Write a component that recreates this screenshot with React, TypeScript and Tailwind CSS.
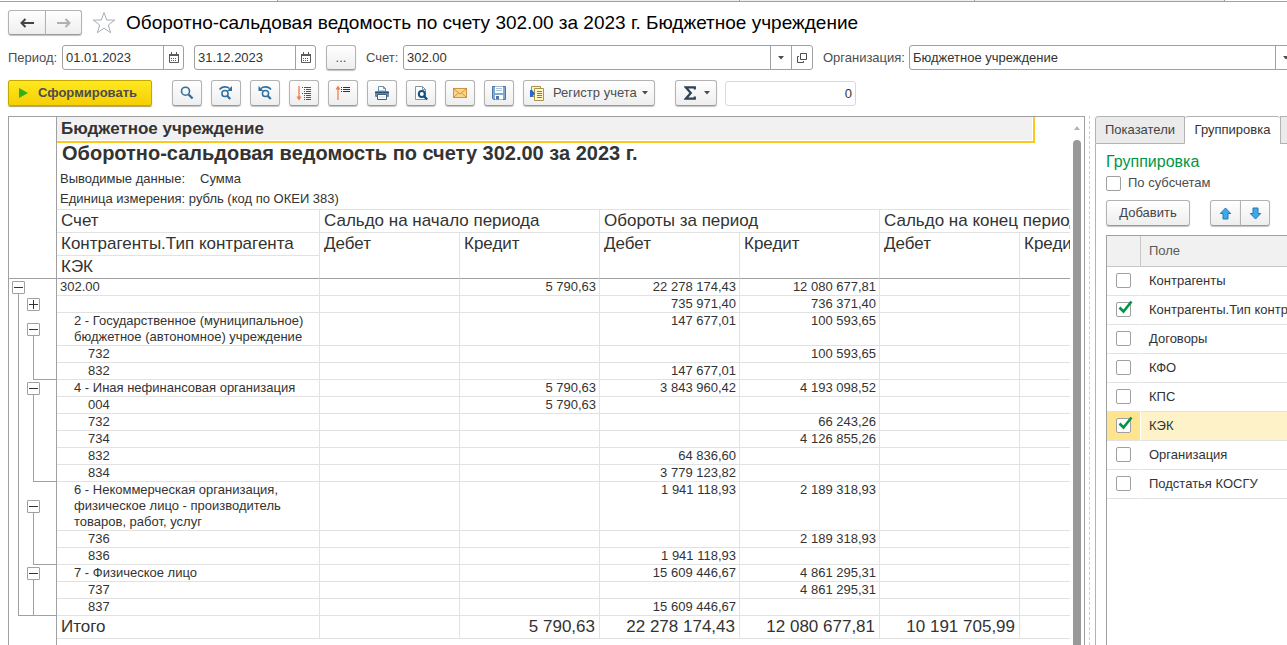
import { useState, type ReactNode } from 'react';

interface ReportRow {
  label: string;
  level: 0 | 1 | 2;
  values: string[];
}

interface OutlineGroup {
  id: string;
  height: string;
  offset: string;
}

interface Field {
  name: string;
  checked: boolean;
}

const rows: ReportRow[] = [
  { label: '302.00', level: 0, values: ['', '5 790,63', '22 278 174,43', '12 080 677,81', '', ''] },
  { label: '', level: 1, values: ['', '', '735 971,40', '736 371,40', '', ''] },
  { label: '2 - Государственное (муниципальное) бюджетное (автономное) учреждение', level: 1, values: ['', '', '147 677,01', '100 593,65', '', ''] },
  { label: '732', level: 2, values: ['', '', '', '100 593,65', '', ''] },
  { label: '832', level: 2, values: ['', '', '147 677,01', '', '', ''] },
  { label: '4 - Иная нефинансовая организация', level: 1, values: ['', '5 790,63', '3 843 960,42', '4 193 098,52', '', ''] },
  { label: '004', level: 2, values: ['', '5 790,63', '', '', '', ''] },
  { label: '732', level: 2, values: ['', '', '', '66 243,26', '', ''] },
  { label: '734', level: 2, values: ['', '', '', '4 126 855,26', '', ''] },
  { label: '832', level: 2, values: ['', '', '64 836,60', '', '', ''] },
  { label: '834', level: 2, values: ['', '', '3 779 123,82', '', '', ''] },
  { label: '6 - Некоммерческая организация, физическое лицо - производитель товаров, работ, услуг', level: 1, values: ['', '', '1 941 118,93', '2 189 318,93', '', ''] },
  { label: '736', level: 2, values: ['', '', '', '2 189 318,93', '', ''] },
  { label: '836', level: 2, values: ['', '', '1 941 118,93', '', '', ''] },
  { label: '7 - Физическое лицо', level: 1, values: ['', '', '15 609 446,67', '4 861 295,31', '', ''] },
  { label: '737', level: 2, values: ['', '', '', '4 861 295,31', '', ''] },
  { label: '837', level: 2, values: ['', '', '15 609 446,67', '', '', ''] },
];

const totals = ['', '5 790,63', '22 278 174,43', '12 080 677,81', '10 191 705,99', ''];

// heights follow the rows that each group spans
const groups: OutlineGroup[] = [
  { id: '2', height: 'h-[67px]', offset: 'pt-[10px]' },
  { id: '4', height: 'h-[102px]', offset: 'pt-[2px]' },
  { id: '6', height: 'h-[83px]', offset: 'pt-[18px]' },
  { id: '7', height: 'h-[51px]', offset: 'pt-[2px]' },
];

const initialFields: Field[] = [
  { name: 'Контрагенты', checked: false },
  { name: 'Контрагенты.Тип контрагента', checked: true },
  { name: 'Договоры', checked: false },
  { name: 'КФО', checked: false },
  { name: 'КПС', checked: false },
  { name: 'КЭК', checked: true },
  { name: 'Организация', checked: false },
  { name: 'Подстатья КОСГУ', checked: false },
];

const indents = { 0: 'pl-[3px]', 1: 'pl-[17px]', 2: 'pl-[31px]' };

const buttonFace = 'border border-[#b3b3b3] border-b-[#9a9a9a] bg-linear-to-b from-white to-[#eeeeee] shadow-[0_1px_1px_#c4c4c4]';

const CaretIcon = () => (
  <svg className="w-[6px] h-[4px] shrink-0" viewBox="0 0 6 4" fill="#4d4d4d">
    <path d="M0 0h6L3 3.6z" />
  </svg>
);

const CalendarIcon = () => (
  <svg className="w-[10px] h-[11px]" viewBox="0 0 10 11" fill="none">
    <path d="M.5 2.500h9v8h-9z" stroke="#5a5a5a" />
    <path d="M0 2h10v2H0zM2 0h1v2H2zM7 0h1v2H7z" fill="#5a5a5a" />
    <path d="M2 6.500h1M4 6.500h1M6 6.500h1M2 8.500h1M4 8.500h1M6 8.500h1" stroke="#5a5a5a" />
  </svg>
);

const SearchIcon = () => (
  <svg className="w-4 h-4" viewBox="0 0 16 16" fill="none" stroke="#2f6f9f">
    <circle cx="6.500" cy="6.200" r="4" strokeWidth="1.600" />
    <path d="M9.600 9.500l4 4" strokeWidth="2.400" />
  </svg>
);

const SearchNextIcon = () => (
  <svg className="w-4 h-4" viewBox="0 0 16 16" fill="none" stroke="#2f6f9f">
    <circle cx="7" cy="8.500" r="3.100" strokeWidth="1.500" />
    <path d="M9.300 11l3 3" strokeWidth="2.200" />
    <path d="M1.500 4.500C4 1.200 9 1.200 11.500 3.500" strokeWidth="1.600" />
    <path d="M14 1v5H9z" fill="#2f6f9f" stroke="none" />
  </svg>
);

const SearchPrevIcon = () => (
  <svg className="w-4 h-4" viewBox="0 0 16 16" fill="none" stroke="#2f6f9f">
    <circle cx="8.500" cy="8.500" r="3.100" strokeWidth="1.500" />
    <path d="M10.800 11l3 3" strokeWidth="2.200" />
    <path d="M14 4.500C11.500 1.200 6.500 1.200 4 3.500" strokeWidth="1.600" />
    <path d="M1.500 1v5h5z" fill="#2f6f9f" stroke="none" />
  </svg>
);

const ExpandIcon = () => (
  <svg className="w-4 h-4" viewBox="0 0 16 16" fill="none">
    <path d="M3 1v12" stroke="#ee7d4c" strokeWidth="1.300" />
    <path d="M.5 11.500h5L3 15.500z" fill="#ee7d4c" />
    <path d="M6 2.500h1M8 2.500h7M8 4.500h1M10 4.500h5M8 6.500h1M10 6.500h5M6 8.500h1M8 8.500h7M8 10.500h1M10 10.500h5M8 12.500h1M10 12.500h5M8 14.500h1M10 14.500h5" stroke="#555" />
  </svg>
);

const CollapseIcon = () => (
  <svg className="w-4 h-4" viewBox="0 0 16 16" fill="none">
    <path d="M3 3v12" stroke="#ee7d4c" strokeWidth="1.300" />
    <path d="M.5 4.500h5L3 .5z" fill="#ee7d4c" />
    <path d="M6 2.500h1M8 2.500h7M6 4.500h1M8 4.500h7M6 6.500h1M8 6.500h7" stroke="#333" />
  </svg>
);

const PrintIcon = () => (
  <svg className="w-4 h-4" viewBox="0 0 16 16" fill="none">
    <path d="M4.500 1.500h5l2 2V6h-7z" fill="#fff" stroke="#6c8cae" />
    <path d="M9.500 1.500v2h2" stroke="#6c8cae" />
    <rect x="1" y="6" width="14" height="6" rx="1" fill="#6489ad" />
    <path d="M1 7.500h14" stroke="#2f4d69" />
    <path d="M3.500 9.500h9v5h-9z" fill="#fff" stroke="#3f5f80" />
    <path d="M5 12h6" stroke="#c5d3e0" />
  </svg>
);

const PreviewIcon = () => (
  <svg className="w-4 h-4" viewBox="0 0 16 16" fill="none">
    <path d="M2.500 1.500h7l3 3v10h-10z" fill="#fff" stroke="#8494a3" />
    <path d="M9.500 1.500v3h3" stroke="#8494a3" />
    <circle cx="8.800" cy="9" r="3" fill="#fff" stroke="#14507f" strokeWidth="2" />
    <path d="M10.900 11.200l3.300 3.300" stroke="#14507f" strokeWidth="2.400" />
  </svg>
);

const MailIcon = () => (
  <svg className="w-4 h-4" viewBox="0 0 16 16" fill="none">
    <rect x="1.500" y="3.500" width="13" height="9" fill="#fad48a" stroke="#cf9440" />
    <path d="M2 4l6 5 6-5M2 12l4.500-4M14 12L9.500 8" stroke="#cf9440" />
  </svg>
);

const SaveIcon = () => (
  <svg className="w-4 h-4" viewBox="0 0 16 16" fill="none">
    <path d="M1.500 1.500h13v13h-12l-1-1z" fill="#7fa8d4" stroke="#4a77a6" />
    <path d="M4 1.500h8V8H4z" fill="#fff" />
    <path d="M5 3.500h6M5 5.500h6" stroke="#a9bfd3" />
    <path d="M4 10h8v4.500H4z" fill="#fff" />
    <path d="M5 11h3v3.500H5z" fill="#4a77a6" />
  </svg>
);

const RegisterIcon = () => (
  <svg className="w-4 h-4" viewBox="0 0 16 16" fill="none">
    <path d="M2.500 1.500h9v10h-9z" fill="#fff3b8" stroke="#a89350" />
    <path d="M5.500 3.500h9v12h-9z" fill="#fff6c9" stroke="#a89350" />
    <path d="M8 6.500h5M8 8.500h5M8 10.500h5M8 12.500h5" stroke="#8a7a40" />
    <path d="M1 5h2l3 3.500L3 12H1z" fill="#2468d8" />
  </svg>
);

const SigmaIcon = () => (
  <svg className="w-3 h-[14px]" viewBox="0 0 12 14" fill="none" stroke="#2f4254" strokeWidth="2.200">
    <path d="M10.800 3.500V1.300H1.800L6.800 7l-5 5.700h9V10.500" />
  </svg>
);

const ArrowIcon = ({ className }: { className?: string }) => (
  <svg className={`w-[13px] h-[13px] ${className ?? ''}`} viewBox="0 0 13 13" fill="#3fa9ea" stroke="#2479b5">
    <path d="M6.500 1l5.200 5.500H9v5.500H4V6.500H1.300z" />
  </svg>
);

const HistoryArrow = ({ className, color }: { className?: string; color: string }) => (
  <svg className={`w-[14px] h-[10px] ${className ?? ''}`} viewBox="0 0 14 10" fill="none" stroke={color} strokeWidth="2">
    <path d="M5.500 1l-4 4 4 4M2 5h12" />
  </svg>
);

const tools = [
  { label: 'Найти', icon: <SearchIcon /> },
  { label: 'Найти следующий', icon: <SearchNextIcon /> },
  { label: 'Найти предыдущий', icon: <SearchPrevIcon /> },
  { label: 'Развернуть группы', icon: <ExpandIcon /> },
  { label: 'Свернуть группы', icon: <CollapseIcon /> },
  { label: 'Печать', icon: <PrintIcon /> },
  { label: 'Предварительный просмотр', icon: <PreviewIcon /> },
  { label: 'Отправить', icon: <MailIcon /> },
  { label: 'Сохранить', icon: <SaveIcon /> },
];

function DateField({ id, label, value }: { id: string; label: string; value: string }) {
  return (
    <div className="flex h-[25px] rounded-[3px] border border-[#a0a0a0] bg-white">
      <input id={id} aria-label={label} defaultValue={value} className="w-[100px] px-[3px] outline-none text-[#333]" />
      <button aria-label="Выбрать дату" className="flex w-5 items-center justify-center border-l border-[#a0a0a0]">
        <CalendarIcon />
      </button>
    </div>
  );
}

function CheckBox({ checked, onChange, id }: { checked: boolean; onChange: () => void; id: string }) {
  return (
    <span className="relative block w-[15px] h-[15px] shrink-0">
      <input
        id={id}
        type="checkbox"
        checked={checked}
        onChange={onChange}
        className="block w-[15px] h-[15px] appearance-none rounded-[2px] border border-[#a0a0a0] bg-white"
      />
      {checked && (
        <svg className="pointer-events-none absolute -top-[2px] left-[2px] w-[15px] h-[14px]" viewBox="0 0 15 14" fill="none">
          <path d="M1.500 7.500l4 4L13.500 1.500" stroke="#009646" strokeWidth="2.600" />
        </svg>
      )}
    </span>
  );
}

function Toggle({ open = true }: { open?: boolean }) {
  return (
    <button aria-label={open ? 'Свернуть' : 'Развернуть'} className="block h-[13px] w-[13px] shrink-0 rounded-[1px] border border-[#a0a0a0] bg-white">
      <svg className="block w-[11px] h-[11px]" viewBox="0 0 11 11" stroke="#333">
        <path d={open ? 'M1 5.500h9' : 'M1 5.500h9M5.500 1v9'} />
      </svg>
    </button>
  );
}

function HeadCell({ children, colSpan }: { children: ReactNode; colSpan?: number }) {
  return (
    <th colSpan={colSpan} className="border-r border-b border-[#e2e2e2] pl-1 text-left align-top font-normal whitespace-nowrap">
      {children}
    </th>
  );
}

function Outline() {
  return (
    <div className="flex w-12 shrink-0 flex-col border-r border-[#a0a0a0]">
      <div className="h-[162px] shrink-0 border-b border-[#a0a0a0]" />
      <div className="flex h-[337px] shrink-0 pt-[2px] pl-[3px]">
        <div className="flex w-[13px] shrink-0 flex-col">
          <Toggle />
          <div className="ml-[6px] flex-1 border-b border-l border-[#a0a0a0]" />
        </div>
        <div className="flex flex-1 flex-col border-b border-[#a0a0a0] pl-[2px]">
          <div className="h-8 shrink-0 pt-[17px]">
            <Toggle open={false} />
          </div>
          {groups.map(group => (
            <div key={group.id} className={`flex shrink-0 flex-col ${group.height} ${group.offset}`}>
              <Toggle />
              <div className="ml-[6px] flex-1 border-b border-l border-[#a0a0a0]" />
            </div>
          ))}
        </div>
      </div>
    </div>
  );
}

function Report() {
  return (
    <section className="flex min-w-0 flex-1 overflow-hidden border-x border-t border-[#a0a0a0] text-[#333]">
      <Outline />
      <div className="min-w-0 flex-1 overflow-hidden">
        <div className="w-[978px] border-r-2 border-b-2 border-[#fcc81c] pr-px pb-px">
          <div className="h-[23px] bg-[#f1f1f1] pl-1 text-[17px] leading-[23px] font-bold">Бюджетное учреждение</div>
        </div>
        <h2 className="h-[25px] pl-[5px] text-xl leading-5 font-bold whitespace-nowrap">
          Оборотно-сальдовая ведомость по счету 302.00 за 2023 г.
        </h2>
        <div className="flex h-5 gap-[15px] pl-[3px] leading-[22px]">
          <span>Выводимые данные:</span>
          <span>Сумма</span>
        </div>
        <p className="h-[21px] pl-[3px] leading-[22px]">Единица измерения: рубль (код по ОКЕИ 383)</p>
        <table className="w-[1103px] table-fixed border-separate border-spacing-0 border-t border-[#e2e2e2]">
          <colgroup>
            <col className="w-[263px]" />
            <col span={6} className="w-[140px]" />
          </colgroup>
          <thead className="text-[17px] leading-[22px]">
            <tr>
              <HeadCell>Счет</HeadCell>
              <HeadCell colSpan={2}>Сальдо на начало периода</HeadCell>
              <HeadCell colSpan={2}>Обороты за период</HeadCell>
              <HeadCell colSpan={2}>Сальдо на конец периода</HeadCell>
            </tr>
            <tr>
              <HeadCell>Контрагенты.Тип контрагента</HeadCell>
              {['Дебет', 'Кредит', 'Дебет', 'Кредит', 'Дебет', 'Кредит'].map((title, i) => (
                <th key={i} rowSpan={2} className="border-r border-b border-r-[#e2e2e2] border-b-[#a0a0a0] pl-1 text-left align-top font-normal">
                  {title}
                </th>
              ))}
            </tr>
            <tr>
              <th className="border-r border-b border-r-[#e2e2e2] border-b-[#a0a0a0] pl-1 text-left font-normal">КЭК</th>
            </tr>
          </thead>
          <tbody className="leading-4">
            {rows.map((row, i) => (
              <tr key={i}>
                <td className={`h-[17px] border-r border-b border-[#e2e2e2] ${indents[row.level]}`}>{row.label}</td>
                {row.values.map((value, j) => (
                  <td key={j} className="border-r border-b border-[#e2e2e2] pr-[3px] text-right align-top">
                    {value}
                  </td>
                ))}
              </tr>
            ))}
          </tbody>
          <tfoot className="text-[17px] leading-[22px]">
            <tr>
              <td className="border-r border-b border-[#e2e2e2] pl-1">Итого</td>
              {totals.map((value, j) => (
                <td key={j} className="border-r border-b border-[#e2e2e2] pr-1 text-right">
                  {value}
                </td>
              ))}
            </tr>
          </tfoot>
        </table>
      </div>
      <div className="flex w-[14px] shrink-0 flex-col items-center pt-[9px]">
        <svg className="w-[6px] h-[4px] shrink-0" viewBox="0 0 6 4" fill="#b5b5b5">
          <path d="M0 4h6L3 0z" />
        </svg>
        <div className="mt-[10px] w-2 flex-1 rounded-t-full bg-[#999]" />
      </div>
    </section>
  );
}

function SettingsPanel() {
  const [fields, setFields] = useState(initialFields);
  const [bySubaccounts, setBySubaccounts] = useState(false);

  const toggleField = (name: string) => {
    setFields(fields.map(f => (f.name === name ? { ...f, checked: !f.checked } : f)));
  };

  return (
    <aside className="flex w-48 shrink-0 flex-col overflow-hidden">
      <div className="flex h-7 shrink-0">
        <button className="w-[90px] shrink-0 rounded-tl-[3px] border border-[#b3b3b3] bg-[#ebebeb] text-[#444]">Показатели</button>
        <button className="w-[95px] shrink-0 rounded-t-[3px] border-t border-[#b3b3b3] pb-px text-[#333]">Группировка</button>
        <button aria-label="Отбор" className="w-[90px] shrink-0 border border-[#b3b3b3] bg-[#ebebeb]" />
      </div>
      <div className="flex flex-1 flex-col border-l border-[#b3b3b3] pt-2 pl-[10px]">
        <h3 className="text-base leading-5 text-[#009646]">Группировка</h3>
        <div className="flex h-[22px] items-center gap-[7px] text-[#4d4d4d]">
          <CheckBox id="by-subaccounts" checked={bySubaccounts} onChange={() => setBySubaccounts(!bySubaccounts)} />
          <label htmlFor="by-subaccounts">По субсчетам</label>
        </div>
        <div className="mt-[6px] flex h-[26px] gap-5">
          <button className={`w-[84px] rounded-[3px] text-[#444] ${buttonFace}`}>Добавить</button>
          <div className="flex">
            <button aria-label="Вверх" className={`flex w-[31px] items-center justify-center rounded-l-[3px] ${buttonFace}`}>
              <ArrowIcon />
            </button>
            <button aria-label="Вниз" className={`-ml-px flex w-[30px] items-center justify-center rounded-r-[3px] ${buttonFace}`}>
              <ArrowIcon className="rotate-180" />
            </button>
          </div>
        </div>
        <div className="mt-[9px] flex-1 overflow-hidden border-t border-l border-[#a0a0a0]">
          <table className="w-[260px] table-fixed border-separate border-spacing-0 text-[#333]">
            <colgroup>
              <col className="w-[34px]" />
              <col />
            </colgroup>
            <thead>
              <tr className="bg-[#f1f1f1]">
                <th className="h-[31px] border-r border-b border-[#c8c8c8]" />
                <th className="border-b border-[#c8c8c8] pl-2 text-left font-normal text-[#5a5a5a]">Поле</th>
              </tr>
            </thead>
            <tbody>
              {fields.map((field, i) => {
                const selected = field.name === 'КЭК';

                return (
                  <tr key={field.name}>
                    <td className={`h-[29px] border-r border-b border-r-white border-b-[#e2e2e2] pb-px pl-[9px] ${selected ? 'bg-[#ffe48f]' : ''}`}>
                      <CheckBox id={`field-${i}`} checked={field.checked} onChange={() => toggleField(field.name)} />
                    </td>
                    <td className={`border-b border-[#e2e2e2] pl-2 ${selected ? 'bg-[#fdf2c8]' : ''}`}>
                      <label htmlFor={`field-${i}`} className="whitespace-nowrap">{field.name}</label>
                    </td>
                  </tr>
                );
              })}
            </tbody>
          </table>
        </div>
      </div>
    </aside>
  );
}

export default function App() {
  return (
    <div className="flex h-screen flex-col overflow-hidden bg-white font-['Liberation_Sans',Arial,sans-serif] text-[13px] leading-4 text-[#4d4d4d]">
      <div className="flex h-[2px] shrink-0 border-b border-[#a0a0a0]">
        <div className="w-[278px] border-r border-[#a0a0a0]" />
        <div className="w-[462px] border-r border-[#a0a0a0] bg-[#f0f0f0]" />
        <div className="w-[235px] border-r border-[#a0a0a0] bg-[#f0f0f0]" />
        <div className="w-[250px] border-r border-[#a0a0a0] bg-[#f0f0f0]" />
      </div>

      <header className="flex h-[43px] shrink-0 items-center pb-[2px] pl-2">
        <div className="flex h-[25px]">
          <button aria-label="Назад" className={`flex w-[38px] items-center justify-center rounded-l-[3px] ${buttonFace}`}>
            <HistoryArrow color="#444" />
          </button>
          <button aria-label="Вперед" className={`-ml-px flex w-[37px] items-center justify-center rounded-r-[3px] ${buttonFace}`}>
            <HistoryArrow color="#b0b0b0" className="rotate-180" />
          </button>
        </div>
        <button aria-label="Добавить в избранное" className="ml-[10px]">
          <svg className="w-6 h-6" viewBox="0 0 24 24" fill="none" stroke="#a8acb3">
            <path d="M12 1.500l2.700 7.500 8 .1-6.400 4.900 2.300 7.700L12 17.200l-6.600 4.500L7.700 14 1.300 9.100l8-.1z" />
          </svg>
        </button>
        <h1 className="ml-[10px] text-[19px] leading-6 whitespace-nowrap text-black">
          Оборотно-сальдовая ведомость по счету 302.00 за 2023 г. Бюджетное учреждение
        </h1>
      </header>

      <div className="-mr-[10px] flex h-[25px] shrink-0 items-center pl-2 whitespace-nowrap">
        <label htmlFor="date-from" className="w-[54px]">Период:</label>
        <DateField id="date-from" label="Начало периода" value="01.01.2023" />
        <div className="ml-[10px]">
          <DateField id="date-to" label="Конец периода" value="31.12.2023" />
        </div>
        <button className={`ml-[10px] h-[25px] w-[30px] rounded-[3px] ${buttonFace}`}>...</button>
        <label htmlFor="account" className="ml-[10px] w-[37px]">Счет:</label>
        <div className="flex h-[25px] min-w-0 flex-[410] rounded-[3px] border border-[#a0a0a0]">
          <input id="account" defaultValue="302.00" className="min-w-0 flex-1 px-[3px] text-[#333] outline-none" />
          <button aria-label="Выбрать счет" className="flex w-[21px] items-center justify-center border-l border-[#a0a0a0]">
            <CaretIcon />
          </button>
          <button aria-label="Открыть счет" className="flex w-[21px] items-center justify-center border-l border-[#a0a0a0]">
            <svg className="w-[10px] h-[10px]" viewBox="0 0 10 10" fill="none" stroke="#4d4d4d">
              <path d="M3.500.5h6v6h-6zM2 3.500H.5v6h6V8" />
            </svg>
          </button>
        </div>
        <label htmlFor="organization" className="ml-[10px] w-[86px]">Организация:</label>
        <div className="flex h-[25px] min-w-0 flex-[388] rounded-[3px] border border-[#a0a0a0]">
          <input id="organization" defaultValue="Бюджетное учреждение" className="min-w-0 flex-1 px-[3px] text-[#333] outline-none" />
          <button aria-label="Выбрать организацию" className="flex w-[21px] items-center justify-center border-l border-[#a0a0a0]">
            <CaretIcon />
          </button>
        </div>
      </div>

      <div className="mt-[10px] flex h-[26px] shrink-0 items-center pl-2">
        <button className="flex h-[26px] w-36 items-center gap-[10px] rounded-[2px] border border-[#c5a800] bg-linear-to-b from-[#ffe81f] to-[#f5cf00] pl-[10px] font-bold text-[#4d4d4d] shadow-[0_1px_1px_#b0a060]">
          <svg className="w-[9px] h-[10px]" viewBox="0 0 9 10" fill="#2fb11c">
            <path d="M0 0l9 5-9 5z" />
          </svg>
          Сформировать
        </button>
        <div className="ml-5 flex gap-[9px]">
          {tools.map(tool => (
            <button key={tool.label} aria-label={tool.label} className={`flex h-[26px] w-[30px] items-center justify-center rounded-[3px] ${buttonFace}`}>
              {tool.icon}
            </button>
          ))}
          <button className={`flex h-[26px] w-[132px] items-center rounded-[3px] pl-[5px] ${buttonFace}`}>
            <RegisterIcon />
            <span className="mr-[5px] ml-2">Регистр учета</span>
            <CaretIcon />
          </button>
        </div>
        <button aria-label="Сумма" className={`ml-5 flex h-[26px] w-[42px] items-center gap-2 rounded-[3px] pl-2 ${buttonFace}`}>
          <SigmaIcon />
          <CaretIcon />
        </button>
        <input aria-label="Сумма ячеек" defaultValue="0" className="ml-2 h-[25px] w-[131px] rounded-[3px] border border-[#d9d9d9] px-[3px] text-right text-[#333] outline-none" />
      </div>

      <main className="mt-[10px] flex min-h-0 flex-1 pl-2">
        <Report />
        <div className="mr-[5px] ml-1 w-px border-l border-dashed border-[#d0d0d0]" />
        <SettingsPanel />
      </main>
    </div>
  );
}
